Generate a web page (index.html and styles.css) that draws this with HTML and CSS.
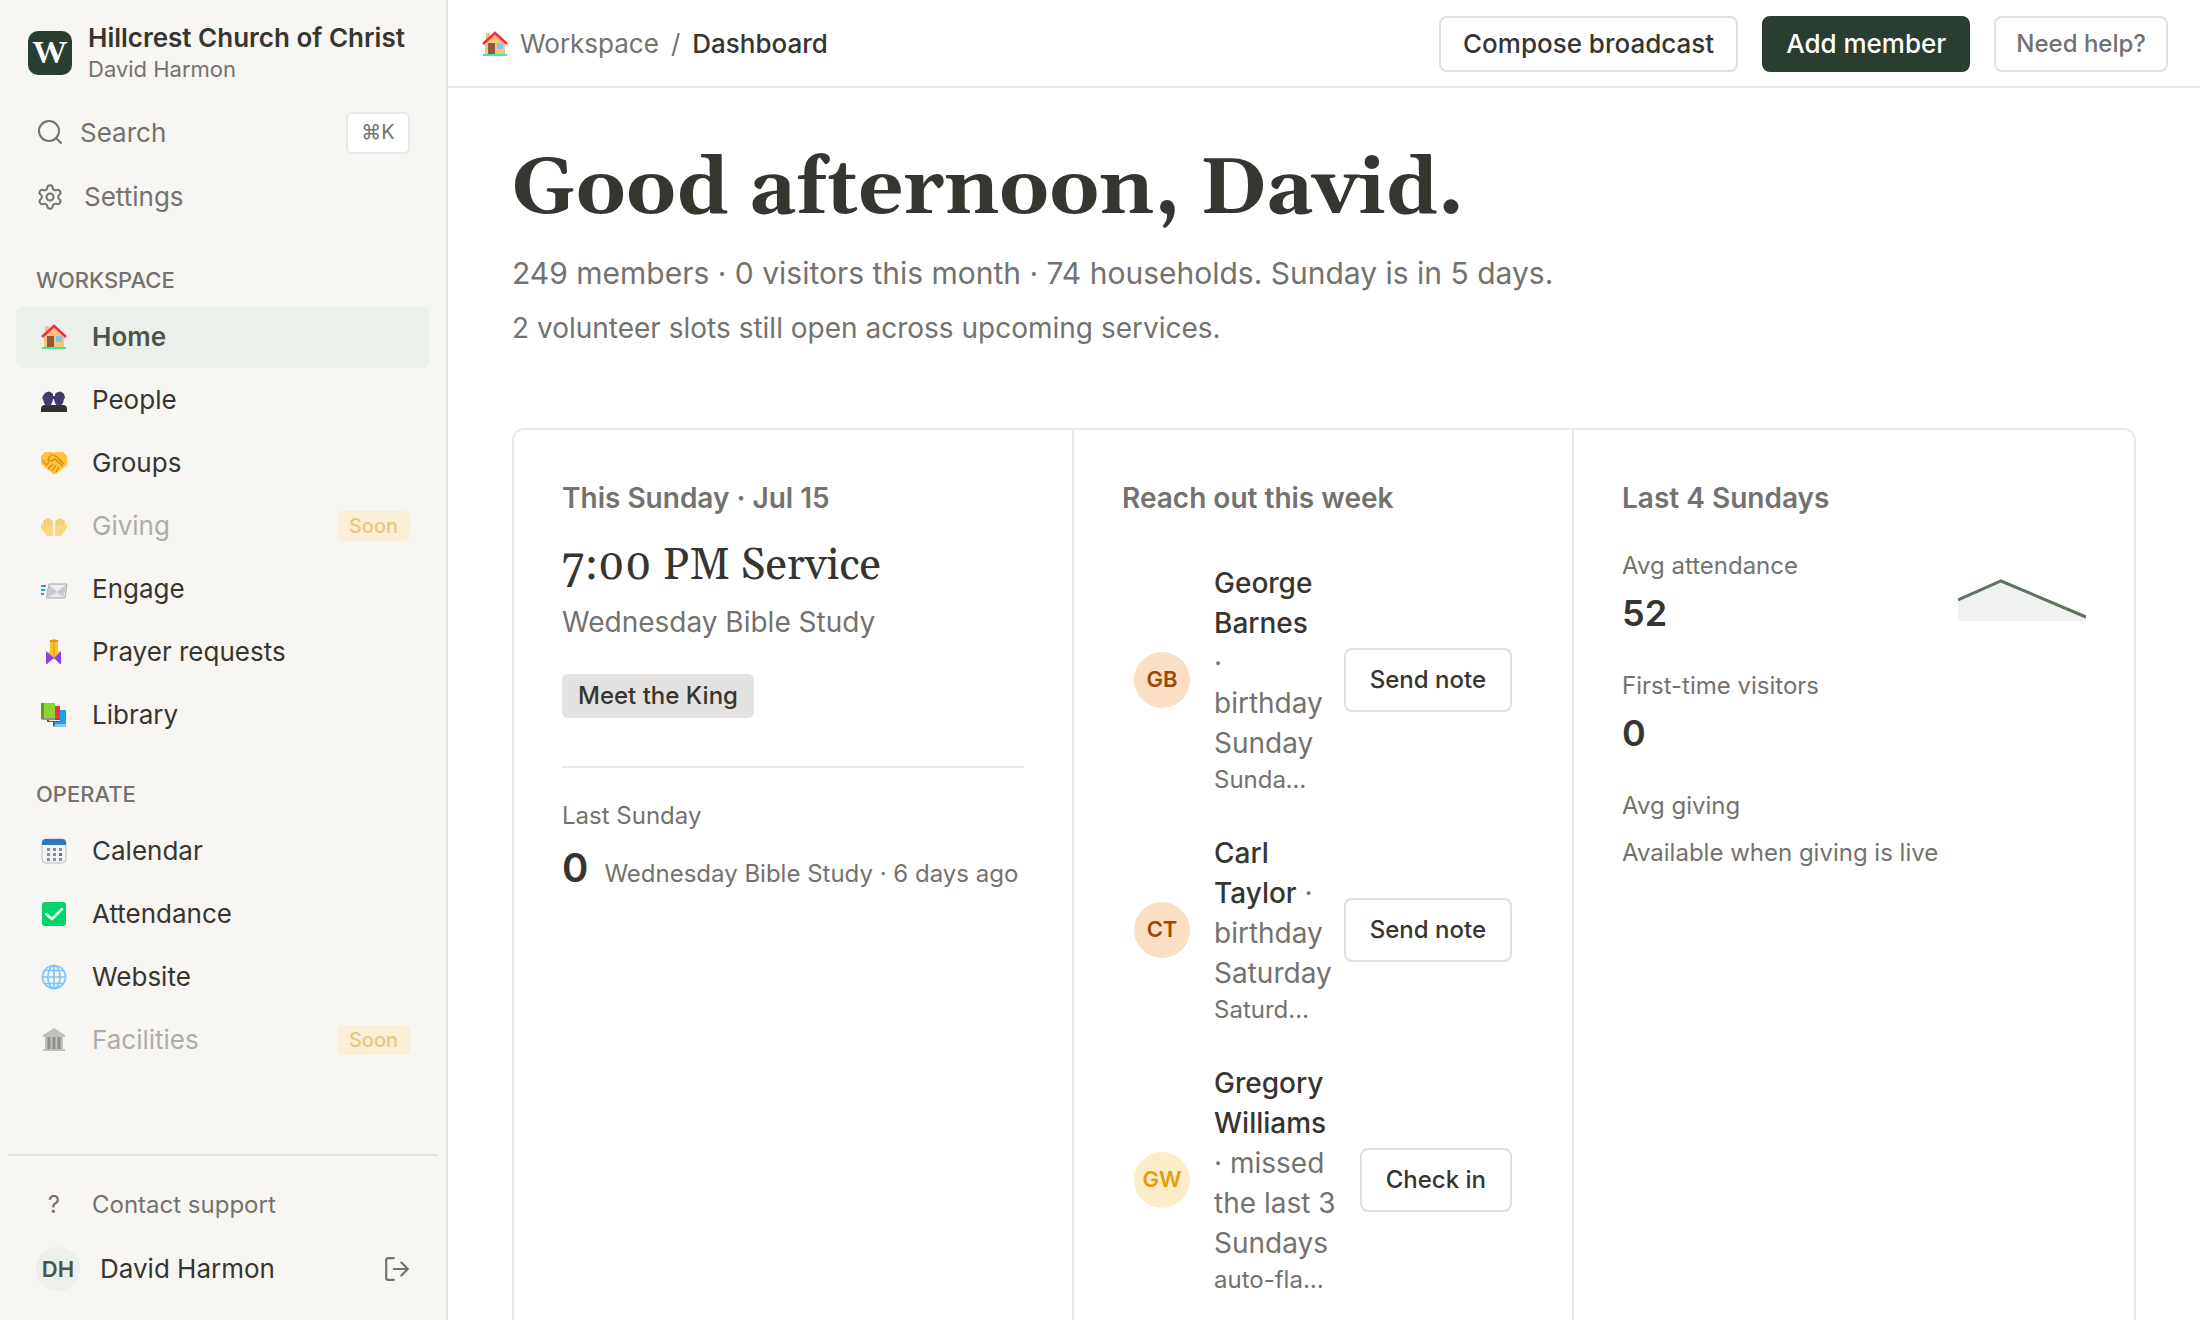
FILE: index.html
```html
<!DOCTYPE html>
<html lang="en">
<head>
<meta charset="utf-8">
<meta name="viewport" content="width=device-width, initial-scale=1">
<title>Dashboard · Hillcrest Church of Christ</title>
<link rel="stylesheet" href="styles.css">
</head>
<body>
<svg class="defs" aria-hidden="true">
  <symbol id="house" viewBox="0 0 26 26">
    <path fill="#f9c37b" d="M4 2h4v6l5-5 10 10v10H3V13l1-1z"/>
    <path fill="#8d5a3c" d="M6 12h7v11H6z"/>
    <path fill="#7cc4ff" d="M15 12h6v6h-6z"/>
    <path fill="none" stroke="#f02f3f" stroke-width="2.6" d="M1 13 13 2l12 11"/>
    <path fill="#44e8a0" d="M1 23h24v2H1z"/>
  </symbol>
</svg>
<div class="app">
  <aside class="sidebar">
    <div class="brand">
      <span class="brand-logo">W</span>
      <div>
        <div class="brand-name">Hillcrest Church of Christ</div>
        <div class="brand-user">David Harmon</div>
      </div>
    </div>
    <div class="tools">
      <button class="item tool search" type="button">
        <svg class="tool-icon" viewBox="0 0 28 28" fill="none" stroke="currentColor" stroke-width="2" stroke-linecap="round"><circle cx="13" cy="12" r="10"/><path d="m20 19 5 5"/></svg>
        <span>Search</span><kbd>⌘K</kbd>
      </button>
      <a class="item tool settings" href="#settings">
        <svg class="tool-icon" viewBox="0 0 24 24" fill="none" stroke="currentColor" stroke-width="1.7" stroke-linecap="round" stroke-linejoin="round"><path d="M9.671 4.136a2.34 2.34 0 0 1 4.659 0 2.34 2.34 0 0 0 3.319 1.915 2.34 2.34 0 0 1 2.33 4.033 2.34 2.34 0 0 0 0 3.831 2.34 2.34 0 0 1-2.33 4.033 2.34 2.34 0 0 0-3.319 1.915 2.34 2.34 0 0 1-4.659 0 2.34 2.34 0 0 0-3.32-1.915 2.34 2.34 0 0 1-2.33-4.033 2.34 2.34 0 0 0 0-3.831A2.34 2.34 0 0 1 6.35 6.051a2.34 2.34 0 0 0 3.319-1.915"/><circle cx="12" cy="12" r="3"/></svg>
        <span>Settings</span>
      </a>
    </div>
    <nav class="nav">
      <h2 class="nav-title">Workspace</h2>
      <a class="item active" href="#home"><svg class="emoji" viewBox="0 0 26 26"><use href="#house"/></svg>Home</a>
      <a class="item" href="#people"><svg class="emoji" viewBox="0 0 26 26">
        <path fill="#33322e" d="M0 25v-3q0-4 4-4h18q4 0 4 4v3z"/>
        <path fill="#403a70" d="M3 7q5-5 9 0v2h2V7q5-5 9 0l1 4-1 1q-1 7-5 7t-5-7h-1q-1 7-5 7t-5-7l-1-1z"/>
        <path fill="#5b3d55" d="M5 10h2v1H5zm4 0h2v1H9zm6 0h2v1h-2zm4 0h2v1h-2z"/>
      </svg>People</a>
      <a class="item" href="#groups"><svg class="emoji" viewBox="0 0 26 26">
        <path fill="#ffc538" d="M4 2h7l2 1 2-1h7l4 4v9L15 24h-3L0 14V6z"/>
        <path fill="none" stroke="#cf8517" stroke-width="1.2" d="M9 5h4l4 3 6 6M9 6l-2 4 3 1 4-2 8 7M2 10l3 5m3-3-3 4m7-2-5 5m8-4-4 6m7-4-3 5"/>
      </svg>Groups</a>
      <a class="item soon" href="#giving"><svg class="emoji" viewBox="0 0 26 26">
        <path fill="#fdb90c" d="M2 12V8l2-1 1-2 2 1 2-1 1 2 2 1v15H6l-4-5-2-4v-3zm22 0V8l-2-1-1-2-2 1-2-1-1 2-2 1v15h6l4-5 2-4v-3z"/>
        <path fill="none" stroke="#d98712" d="M4 7v6m3-7v6m3-5v6m12-6v6m-3-7v6m-3-5v6"/>
      </svg>Giving<span class="badge-soon">Soon</span></a>
      <a class="item" href="#engage"><svg class="emoji" viewBox="0 0 26 26">
        <path stroke="#16a0e8" stroke-width="2" d="M0 10h5M0 14h4M0 18h3"/>
        <path fill="#e6e6e8" stroke="#a8a8ad" d="M8 8h18l-2 14H5.500z"/>
        <path fill="#c9c9cd" d="m8 9 8 7 9-7-1 5-2 7-6-5-9 5z"/>
        <path fill="#f1f1f3" d="M9 9h15l-8 6z"/>
      </svg>Engage</a>
      <a class="item" href="#prayer"><svg class="emoji" viewBox="0 0 26 26">
        <path fill="#ffc02e" d="M9 2 12 0h2l3 2v10l4 3-8 6-7-6 3-3z"/>
        <path fill="#d99a14" d="M9 1h8v2H9zm3.500 2h1v16h-1z"/>
        <path fill="#8740f5" d="m5 12 8 7 7-7v13h-1l-6-6-7 6H5z"/>
      </svg>Prayer requests</a>
      <a class="item" href="#library"><svg class="emoji" viewBox="0 0 26 26">
        <path fill="#12a5ea" d="M12 8h13v16H12z"/><path fill="#93c4ea" d="M12 22h13v3H12z"/><path fill="#2470b8" d="M12 20h2v4h-2z"/>
        <path fill="#8a4a35" d="M6 16h13v4H6z"/><path fill="#ece4e2" d="M8 18h11v1H8z"/><path fill="#ee3442" d="M9 4h10v13H9z"/>
        <path fill="#8ad82f" d="M0 1h14v16H0z"/><path fill="#5f9a33" d="M0 1h3v16H0z"/><path fill="#8d918b" d="M1 16h13v2H1z"/>
      </svg>Library</a>
    </nav>
    <nav class="nav operate">
      <h2 class="nav-title">Operate</h2>
      <a class="item" href="#calendar"><svg class="emoji" viewBox="0 0 26 26">
        <rect x="1" y="1" width="24" height="24" rx="4" fill="#f4f4f5" stroke="#bfc0c3"/>
        <path fill="#2b79c2" d="M1 7V5q0-4 4-4h16q4 0 4 4v2z"/>
        <path fill="#8d8f91" d="M6 10h3v3H6zm6 0h3v3h-3zm6 0h3v3h-3zM6 15h3v3H6zm6 0h3v3h-3zm-6 5h3v3H6zm6 0h3v3h-3zm6 0h3v3h-3z"/><path fill="#1686d9" d="M18 15h3v3h-3z"/>
      </svg>Calendar</a>
      <a class="item" href="#attendance"><svg class="emoji" viewBox="0 0 26 26">
        <rect x="1" y="1" width="24" height="24" rx="3" fill="#00d46a"/><path d="m5 13 6 5L21 8" fill="none" stroke="#fff" stroke-width="2.500" stroke-linecap="round"/>
      </svg>Attendance</a>
      <a class="item" href="#website"><svg class="emoji" viewBox="0 0 26 26" fill="none" stroke="#7cc4ff" stroke-width="1.700">
        <circle cx="13" cy="13" r="11.500"/><ellipse cx="13" cy="13" rx="6" ry="11.500"/><path d="M13 1v24M1.500 13h23M4 6.500h18M4 19.500h18"/>
      </svg>Website</a>
      <a class="item soon" href="#facilities"><svg class="emoji" viewBox="0 0 26 26">
        <path fill="#8b8b8b" d="M2 8 13 1l11 7v2H2zm2 2h18v12H4zM2 22h22v2H2z"/><path stroke="#262626" stroke-width="3" d="M8 10v12m5-12v12m5-12v12"/>
      </svg>Facilities<span class="badge-soon">Soon</span></a>
    </nav>
    <div class="side-foot">
      <a class="item support" href="#support"><span class="emoji question">?</span>Contact support</a>
      <div class="item account">
        <span class="account-avatar">DH</span><span>David Harmon</span>
        <button class="logout" type="button" aria-label="Log out">
          <svg viewBox="0 0 24 24" fill="none" stroke="currentColor" stroke-width="2" stroke-linecap="round" stroke-linejoin="round"><path d="M9 2H4q-2 0-2 2v16q0 2 2 2h5M9 12h13m-6-6 6 6-6 6"/></svg>
        </button>
      </div>
    </div>
  </aside>

  <main class="main">
    <header class="topbar">
      <div class="crumbs">
        <svg class="crumb-icon" viewBox="0 0 26 26"><use href="#house"/></svg>
        <a href="#workspace">Workspace</a><span>/</span><span class="here">Dashboard</span>
      </div>
      <div class="actions">
        <button class="btn" type="button">Compose broadcast</button>
        <button class="btn primary" type="button">Add member</button>
        <button class="btn help" type="button">Need help?</button>
      </div>
    </header>
    <div class="content">
      <h1>Good afternoon, David.</h1>
      <p class="lead">249 members · 0 visitors this month · 74 households. Sunday is in 5 days.</p>
      <p class="sublead">2 volunteer slots still open across upcoming services.</p>

      <div class="panel">
        <section class="col">
          <h2>This Sunday · Jul 15</h2>
          <div class="service">7:00 PM Service</div>
          <div class="service-sub">Wednesday Bible Study</div>
          <span class="tag">Meet the King</span>
          <div class="last">
            <div class="label">Last Sunday</div>
            <div class="last-row"><strong>0</strong><span class="label">Wednesday Bible Study · 6 days ago</span></div>
          </div>
        </section>
        <section class="col">
          <h2>Reach out this week</h2>
          <ul class="people">
            <li>
              <span class="avatar">GB</span>
              <div class="who"><div class="line"><b>George Barnes</b> · birthday Sunday</div><div class="detail">Sunday birthday</div></div>
              <button class="btn small" type="button">Send note</button>
            </li>
            <li>
              <span class="avatar">CT</span>
              <div class="who"><div class="line"><b>Carl Taylor</b> · birthday Saturday</div><div class="detail">Saturday birthday</div></div>
              <button class="btn small" type="button">Send note</button>
            </li>
            <li>
              <span class="avatar yellow">GW</span>
              <div class="who"><div class="line"><b>Gregory Williams</b> · missed the last 3 Sundays</div><div class="detail">auto-flagged</div></div>
              <button class="btn small" type="button">Check in</button>
            </li>
          </ul>
        </section>
        <section class="col">
          <h2>Last 4 Sundays</h2>
          <div class="stats">
            <div class="stat">
              <div><div class="label">Avg attendance</div><div class="value">52</div></div>
              <svg class="spark" viewBox="0 0 128 44" aria-hidden="true"><path fill="#f0f2f1" d="M0 23 43 4l85 36v4H0z"/><path fill="none" stroke="#5b7560" stroke-width="3" d="M0 23 43 4l85 36"/></svg>
            </div>
            <div class="stat"><div><div class="label">First-time visitors</div><div class="value">0</div></div></div>
            <div class="stat"><div><div class="label">Avg giving</div><div class="value pending">Available when giving is live</div></div></div>
          </div>
        </section>
      </div>
    </div>
  </main>
</div>
</body>
</html>
```
FILE: styles.css
```css
:root {
  --ink: #37352f;
  --muted: #73726e;
  --line: #e9e9e7;
  --green: #2a3d31;
  --mint: #ebf0ea;
  --sans: Inter, "Liberation Sans", sans-serif;
  --serif: Georgia, Gelasio, "Liberation Serif", serif;
}
* { box-sizing: border-box; }
body { margin: 0; color: var(--ink); font: 26px/32px var(--sans); background: #fff; }
h1, h2, p, ul { margin: 0; padding: 0; }
a { color: inherit; text-decoration: none; }
button { font: inherit; color: inherit; cursor: pointer; }
.defs { display: none; }
.app { display: flex; height: 100vh; overflow: hidden; }

/* Sidebar */
.sidebar { flex: 0 0 448px; display: flex; flex-direction: column; padding-top: 22px; background: #f7f6f3; border-right: 2px solid #e3e2e0; }
.brand { display: flex; align-items: center; gap: 16px; padding: 0 28px; margin-bottom: 17px; white-space: nowrap; }
.brand-logo { width: 44px; height: 44px; border-radius: 10px; background: var(--green); color: #fff; text-align: center; font: bold 30px/46px var(--serif); }
.brand-name { font-weight: 600; }
.brand-user { font-size: 22px; line-height: 30px; color: var(--muted); }
.item { display: flex; align-items: center; gap: 20px; height: 62px; padding: 0 20px; border-radius: 8px; }
.tools, .nav { display: flex; flex-direction: column; gap: 1px; padding: 0 16px; }
.tool { height: 63px; border: 0; background: none; color: var(--muted); text-align: left; }
.search { gap: 16px; }
.tool-icon { width: 28px; height: 28px; }
kbd { margin-left: auto; min-width: 64px; text-align: center; height: 42px; border: 2px solid var(--line); border-radius: 6px; background: #fff; font: 20px/36px var(--sans); }
.nav-title { margin: 36px 20px 9px; font-size: 22px; line-height: 32px; font-weight: 500; color: var(--muted); text-transform: uppercase; }
.operate .nav-title { margin-top: 32px; }
.emoji { width: 36px; height: 26px; flex: none; }
.active { background: var(--mint); color: #4a5549; font-weight: 600; }
.soon { opacity: 0.5; color: #65645f; }
.badge-soon { margin-left: auto; padding: 0 12px; border-radius: 6px; background: #fde7bc; color: #dd9b08; font-size: 20px; line-height: 30px; font-weight: 500; }
.side-foot { display: grid; gap: 2px; margin: auto 8px 0; padding: 18px 8px 20px; border-top: 2px solid #e3e2e0; }
.question { text-align: center; line-height: 26px; }
.support { color: var(--muted); font-size: 24px; }
.account-avatar { display: grid; place-items: center; width: 44px; height: 44px; border-radius: 50%; background: var(--mint); color: #4a5549; font-size: 22px; font-weight: 600; }
.logout { margin-left: auto; padding: 0; width: 26px; height: 26px; border: 0; background: none; color: var(--muted); }
.logout svg { display: block; }

/* Top bar */
.main { flex: 1; min-width: 0; overflow-y: auto; scrollbar-width: none; }
.topbar { display: flex; align-items: center; justify-content: space-between; height: 88px; padding: 2px 32px 0; border-bottom: 2px solid var(--line); }
.crumbs { display: flex; align-items: center; gap: 12px; padding-left: 2px; color: var(--muted); }
.crumb-icon { width: 26px; height: 26px; }
.here { color: var(--ink); font-weight: 500; }
.actions { display: flex; gap: 24px; }
.btn { height: 56px; padding: 0 22px; border: 2px solid #dfdfdd; border-radius: 8px; background: #fff; font-weight: 500; white-space: nowrap; }
.primary { background: var(--green); border-color: var(--green); color: #fff; }
.help { padding: 0 20px; font-size: 24px; color: var(--muted); }
.small { height: 64px; padding: 0 24px; font-size: 24px; }

/* Page content */
.content { padding: 54px 64px 48px; }
h1 { font: bold 79px/96px var(--serif); white-space: nowrap; }
.lead { margin-top: 11px; font-size: 30px; line-height: 48px; color: var(--muted); }
.sublead { margin-top: 11px; font-size: 28px; line-height: 40px; color: var(--muted); }
.panel { display: grid; grid-template-columns: minmax(0, 28fr) minmax(0, 25fr) minmax(0, 28fr); margin-top: 80px; border: 2px solid var(--line); border-radius: 12px; }
.col { padding: 48px; border-right: 2px solid var(--line); }
.col:last-child { border-right: 0; }
.col h2 { font-size: 28px; line-height: 40px; font-weight: 600; color: var(--muted); }
.label { font-size: 24px; line-height: 36px; color: var(--muted); }

.service { margin-top: 20px; font: 44px/56px var(--serif); }
.service-sub { margin-top: 8px; font-size: 28px; line-height: 40px; color: var(--muted); }
.tag { display: inline-block; margin-top: 32px; padding: 0 16px; border-radius: 6px; background: #e3e2e0; font-size: 24px; line-height: 44px; font-weight: 500; }
.last { margin-top: 48px; padding-top: 30px; border-top: 2px solid var(--line); }
.last-row { display: flex; align-items: baseline; gap: 16px; margin-top: 8px; white-space: nowrap; }
.last-row strong { font-size: 40px; line-height: 52px; font-weight: 600; }

.people { list-style: none; margin-top: 27px; }
.people li { display: flex; align-items: center; gap: 24px; padding: 18px 12px; }
.avatar { flex: none; width: 56px; height: 56px; border-radius: 50%; background: #fbdfc4; color: #9a4a08; text-align: center; font-size: 22px; line-height: 54px; font-weight: 600; }
.yellow { background: #fdecc8; color: #dfa010; }
.who { flex: 1; min-width: 0; color: var(--muted); }
.line { font-size: 28px; line-height: 40px; }
.line b { color: var(--ink); font-weight: 500; }
.detail { font-size: 24px; line-height: 34px; overflow: hidden; text-overflow: ellipsis; white-space: nowrap; }

.stats { display: grid; gap: 27px; margin-top: 30px; }
.stat { display: flex; align-items: center; justify-content: space-between; }
.value { margin-top: 1px; font-size: 36px; line-height: 56px; font-weight: 600; }
.pending { font-size: 24px; font-weight: 400; color: var(--muted); }
.spark { width: 128px; height: 44px; margin-top: 8px; }
```
